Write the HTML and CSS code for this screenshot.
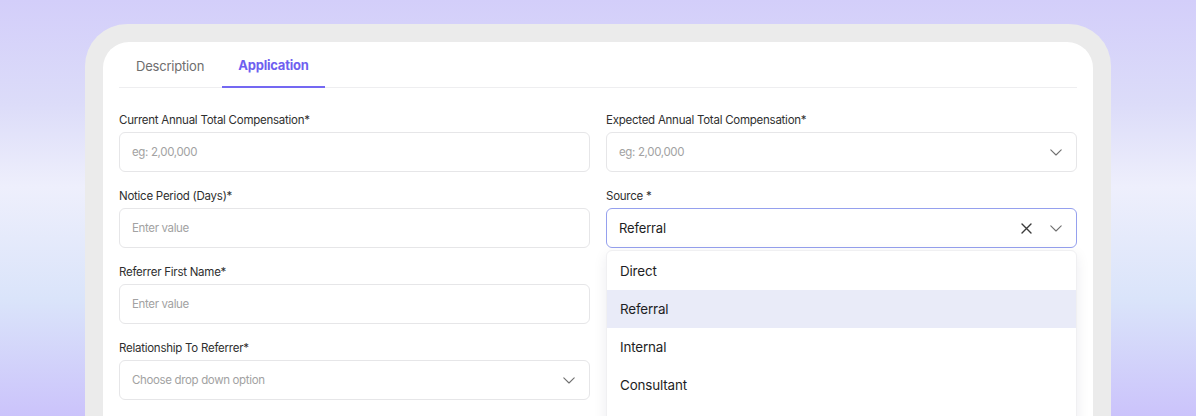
FILE: index.html
```html
<!DOCTYPE html>
<html>
<head>
<meta charset="utf-8">
<link rel="stylesheet" href="styles.css">
</head>
<body>
<div class="stage">
  <div class="frame">
    <div class="card">
      <div class="tabs">
        <div class="tab">Description</div>
        <div class="tab active">Application</div>
      </div>
      <div class="form">
        <div class="field">
          <div class="label">Current Annual Total Compensation*</div>
          <div class="input"><span class="ph">eg: 2,00,000</span></div>
        </div>
        <div class="field">
          <div class="label">Expected Annual Total Compensation*</div>
          <div class="input"><span class="ph">eg: 2,00,000</span>
            <svg class="chev" viewBox="0 0 12 7" width="12" height="7"><path d="M0.8 0.8l5.2 5.2 5.2-5.2" fill="none" stroke="#707070" stroke-width="1.1" stroke-linecap="round" stroke-linejoin="round"/></svg>
          </div>
        </div>
        <div class="field">
          <div class="label">Notice Period (Days)*</div>
          <div class="input"><span class="ph">Enter value</span></div>
        </div>
        <div class="field">
          <div class="label">Source *</div>
          <div class="input focused"><span class="val">Referral</span>
            <svg class="clear" viewBox="0 0 11 11" width="11" height="11"><path d="M1 1l9 9M10 1L1 10" fill="none" stroke="#3a3a3a" stroke-width="1.4" stroke-linecap="round"/></svg>
            <svg class="chev" viewBox="0 0 12 7" width="12" height="7"><path d="M0.8 0.8l5.2 5.2 5.2-5.2" fill="none" stroke="#707070" stroke-width="1.1" stroke-linecap="round" stroke-linejoin="round"/></svg>
          </div>
          <div class="menu">
            <div class="opt">Direct</div>
            <div class="opt sel">Referral</div>
            <div class="opt">Internal</div>
            <div class="opt">Consultant</div>
          </div>
        </div>
        <div class="field">
          <div class="label">Referrer First Name*</div>
          <div class="input"><span class="ph">Enter value</span></div>
        </div>
        <div class="field"></div>
        <div class="field">
          <div class="label">Relationship To Referrer*</div>
          <div class="input"><span class="ph">Choose drop down option</span>
            <svg class="chev" viewBox="0 0 12 7" width="12" height="7"><path d="M0.8 0.8l5.2 5.2 5.2-5.2" fill="none" stroke="#707070" stroke-width="1.1" stroke-linecap="round" stroke-linejoin="round"/></svg>
          </div>
        </div>
        <div class="field"></div>
      </div>
    </div>
  </div>
</div>
</body>
</html>
```
FILE: styles.css
```css
* { box-sizing: border-box; }
html, body { margin: 0; padding: 0; }
body {
  width: 1196px;
  height: 416px;
  overflow: hidden;
  font-family: Inter, "Liberation Sans", sans-serif;
}
.stage {
  height: 416px;
  overflow: hidden;
  padding: 24px 85px 0 85px;
  background: linear-gradient(180deg, #d3cefa 0%, #dcdcf9 25%, #eeeffc 45%, #dae4fa 72%, #cbc3fb 100%);
}
.frame {
  background: #ebebeb;
  border-radius: 42px 42px 0 0;
  padding: 18px 18px 0 18px;
  height: 392px;
}
.card {
  background: #fff;
  border-radius: 26px 26px 0 0;
  padding: 0 16px;
  height: 374px;
}
.tabs {
  display: flex;
  gap: 1px;
  border-bottom: 1px solid #eeeef0;
  height: 46px;
}
.tab {
  padding: 16px 17px 0 17px;
  font-size: 13px;
  color: #6e6e6e;
  letter-spacing: -0.2px;
  height: 46px;
}
.tab.active {
  color: #6f5ff0;
  font-weight: 700;
  border-bottom: 2px solid #7468f2;
  padding: 15px 16px 0 16px;
}
.form {
  display: grid;
  grid-template-columns: 1fr 1fr;
  column-gap: 16px;
  row-gap: 16px;
  padding-top: 24px;
}
.field { position: relative; }
.label {
  font-size: 11.5px;
  line-height: 16px;
  color: #2f2f2f;
  letter-spacing: -0.25px;
  margin-bottom: 4px;
}
.input {
  height: 40px;
  border: 1px solid #e6e6e8;
  border-radius: 6px;
  display: flex;
  align-items: center;
  padding: 0 14px 0 12px;
  gap: 18px;
}
.ph {
  font-size: 11.5px;
  color: #a2a2a2;
  letter-spacing: -0.35px;
  flex: 1;
}
.val {
  font-size: 13px;
  color: #1e1e24;
  letter-spacing: -0.15px;
  flex: 1;
}
.input.focused { border-color: #95a0ee; }
.chev { flex: none; }
.clear { flex: none; }
.menu {
  position: absolute;
  left: 0;
  right: 0;
  top: 62px;
  height: 200px;
  background: #fff;
  border: 1px solid #f0f0f2;
  border-radius: 6px;
  box-shadow: 0 4px 14px rgba(30, 30, 60, 0.08);
  padding-top: 1px;
  z-index: 5;
}
.opt {
  height: 38px;
  display: flex;
  align-items: center;
  padding: 0 13px;
  font-size: 13.4px;
  color: #1e1e24;
  letter-spacing: -0.15px;
}
.opt.sel { background: #e9ebf8; }
```
